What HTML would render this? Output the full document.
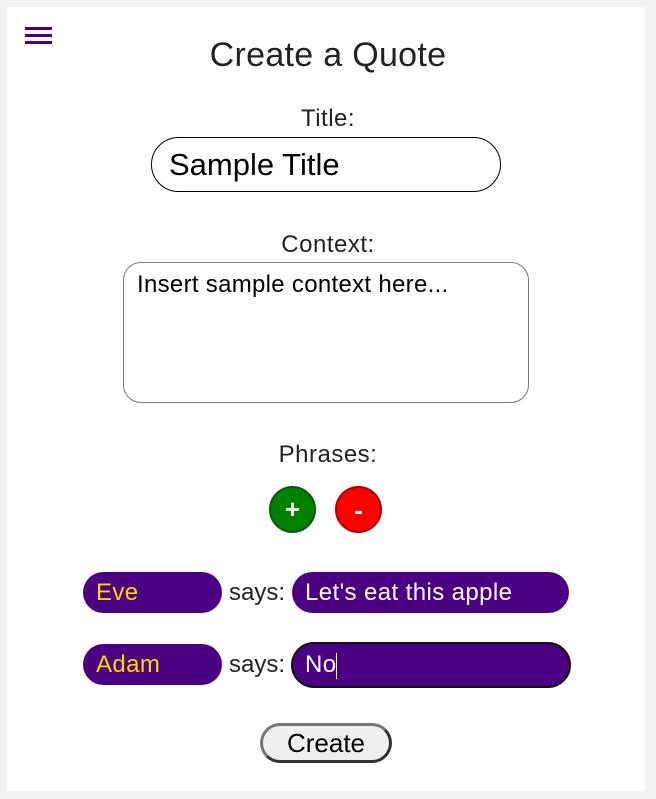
<!DOCTYPE html>
<html><head><style>
body{margin:0;width:656px;height:799px;background:#f1f2f3;position:relative;overflow:hidden;font-family:"Liberation Sans",Arial,sans-serif;}
.card{position:absolute;left:7px;top:7px;width:638px;height:784px;background:#fff;}
.a{position:absolute;}
.lbl{position:absolute;left:0;width:656px;text-align:center;color:#222;font-size:24px;letter-spacing:0.5px;}
.pill{position:absolute;background:#4b0082;border-radius:21px;box-sizing:border-box;font-size:24px;line-height:41px;letter-spacing:0.4px;}
</style></head><body>
<div class="card"></div>
<div class="a" style="left:25px;top:27px;width:27px;height:3px;background:#4b0082"></div>
<div class="a" style="left:25px;top:34px;width:27px;height:3px;background:#4b0082"></div>
<div class="a" style="left:25px;top:41px;width:27px;height:3px;background:#4b0082"></div>
<div class="lbl" style="top:36px;font-size:34px;line-height:38px;letter-spacing:0.3px">Create a Quote</div>
<div class="lbl" style="top:106px;line-height:26px;">Title:</div>
<div class="a" style="left:151px;top:137px;width:350px;height:55px;border:1px solid #000;border-radius:28px;box-sizing:border-box;font-size:31px;line-height:53px;padding-left:17px;color:#000">Sample Title</div>
<div class="lbl" style="top:232px;line-height:26px;">Context:</div>
<div class="a" style="left:123px;top:262px;width:406px;height:141px;border:1px solid #777;border-radius:18px;box-sizing:border-box;font-size:24px;letter-spacing:0.3px;padding:8px 13px;color:#000">Insert sample context here...</div>
<div class="lbl" style="top:442px;line-height:26px;">Phrases:</div>
<div class="a" style="left:269px;top:486px;width:47px;height:47px;border-radius:50%;background:#008000;border:2px solid #0a5a0a;box-sizing:border-box;color:#fff;font-size:26px;font-weight:bold;text-align:center;line-height:42px">+</div>
<div class="a" style="left:335px;top:486px;width:47px;height:47px;border-radius:50%;background:#f00;border:2px solid #a00;box-sizing:border-box;color:#fff;font-size:26px;font-weight:bold;text-align:center;line-height:44px">-</div>
<div class="pill" style="left:83px;top:572px;width:139px;height:41px;color:#ffd700;padding-left:13px">Eve</div>
<div class="a" style="left:229px;top:572px;font-size:24px;line-height:41px;color:#222">says:</div>
<div class="pill" style="left:292px;top:572px;width:277px;height:41px;color:#fff;padding-left:13px">Let's eat this apple</div>
<div class="pill" style="left:83px;top:644px;width:139px;height:41px;color:#ffd700;padding-left:13px">Adam</div>
<div class="a" style="left:229px;top:644px;font-size:24px;line-height:41px;color:#222">says:</div>
<div class="pill" style="left:291px;top:642px;width:280px;height:46px;border:2px solid #111;border-radius:23px;color:#fff;padding-left:12px;line-height:42px">No<span style="display:inline-block;width:1px;height:26px;background:#fff;vertical-align:middle"></span></div>
<div class="a" style="left:260px;top:723px;width:132px;height:40px;border:3px solid #333;border-left-color:#777;border-top-color:#777;border-radius:20px;background:#efefef;box-sizing:border-box;text-align:center;font-size:26px;line-height:34px;color:#000">Create</div>
</body></html>
